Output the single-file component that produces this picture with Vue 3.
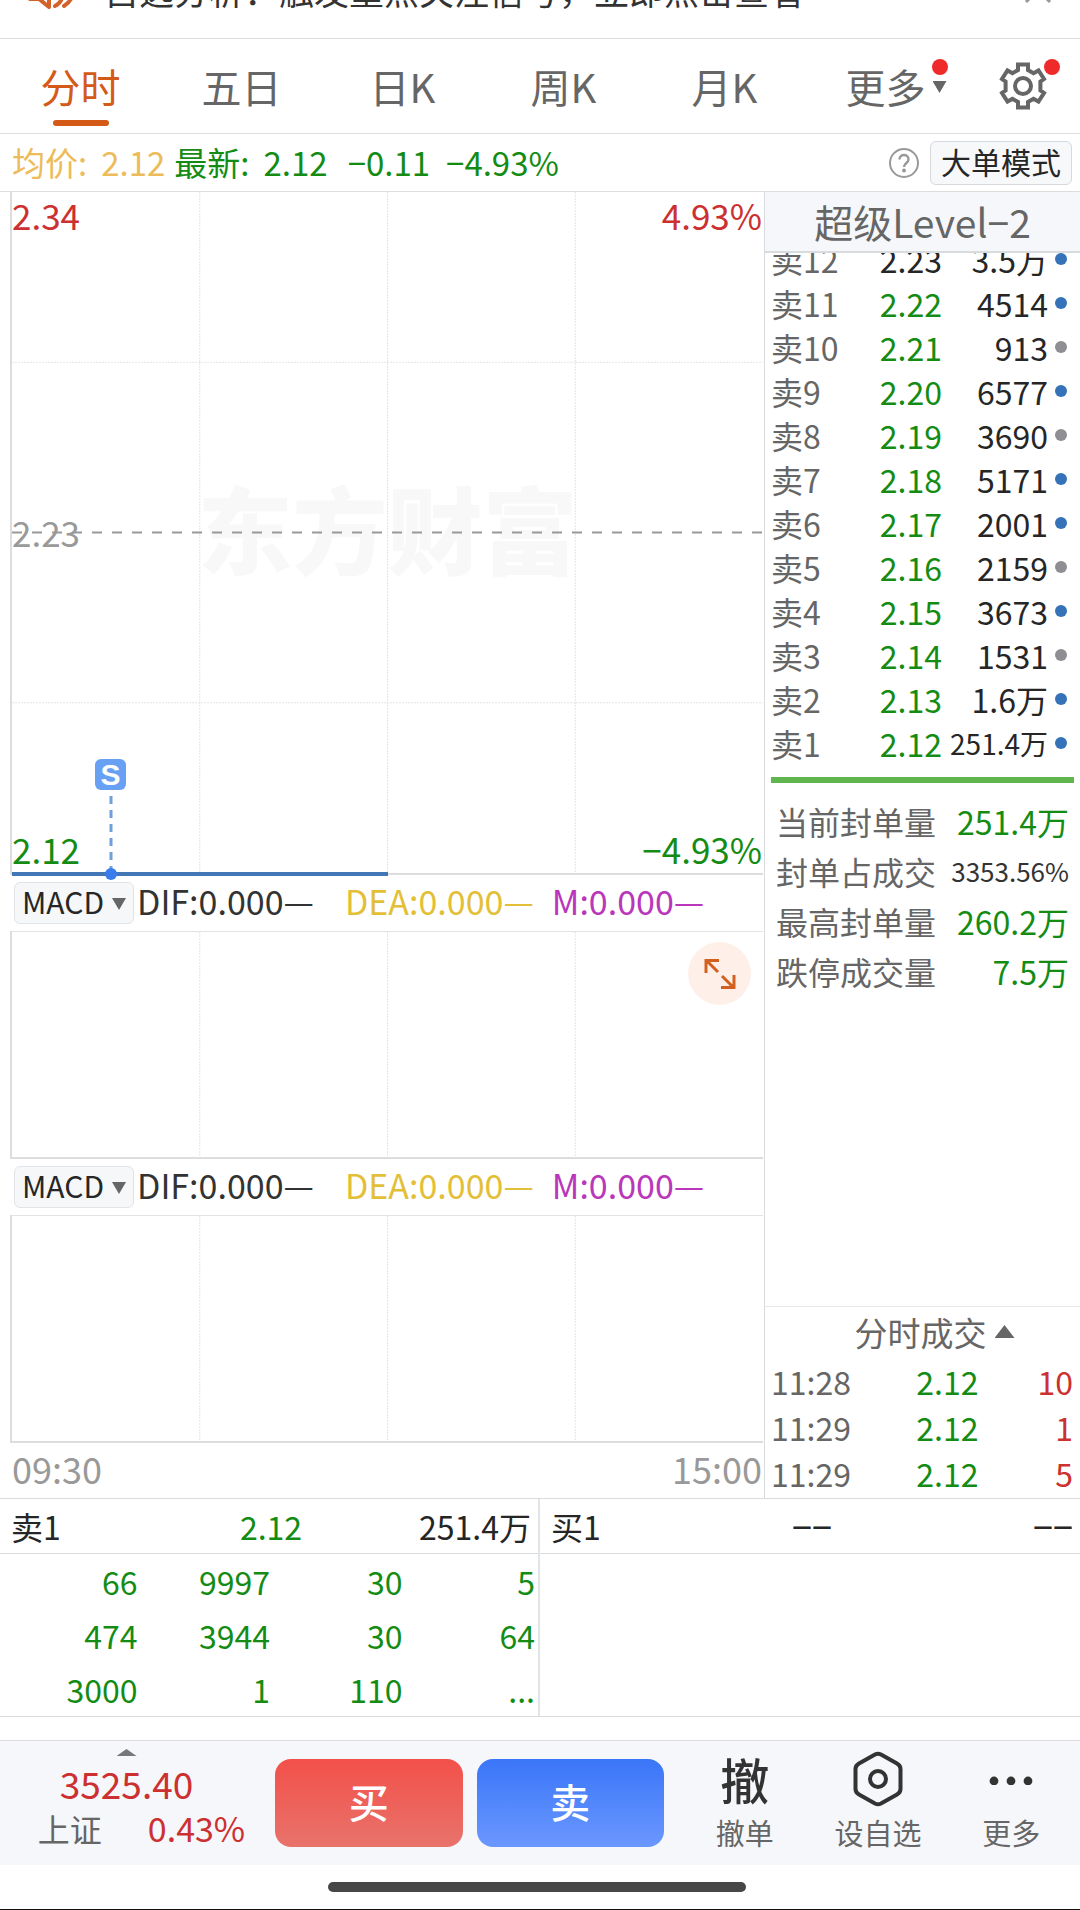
<script setup>
import { ref } from 'vue'

const tabs = ['分时', '五日', '日K', '周K', '月K', '更多']
const active = ref('分时')

const asks = [
  { n: 12, price: '2.23', vol: '3.5万', big: true, flat: true },
  { n: 11, price: '2.22', vol: '4514', big: true },
  { n: 10, price: '2.21', vol: '913' },
  { n: 9, price: '2.20', vol: '6577', big: true },
  { n: 8, price: '2.19', vol: '3690' },
  { n: 7, price: '2.18', vol: '5171', big: true },
  { n: 6, price: '2.17', vol: '2001', big: true },
  { n: 5, price: '2.16', vol: '2159' },
  { n: 4, price: '2.15', vol: '3673', big: true },
  { n: 3, price: '2.14', vol: '1531' },
  { n: 2, price: '2.13', vol: '1.6万', big: true },
  { n: 1, price: '2.12', vol: '251.4万', big: true, small: true },
]

const stats = [
  { label: '当前封单量', value: '251.4万' },
  { label: '封单占成交', value: '3353.56%', ratio: true },
  { label: '最高封单量', value: '260.2万' },
  { label: '跌停成交量', value: '7.5万' },
]

const trades = [
  { time: '11:28', price: '2.12', qty: '10' },
  { time: '11:29', price: '2.12', qty: '1' },
  { time: '11:29', price: '2.12', qty: '5' },
]

const queue = [
  ['66', '9997', '30', '5'],
  ['474', '3944', '30', '64'],
  ['3000', '1', '110', '...'],
]

const indicators = ref(['MACD', 'MACD'])
</script>

<template>
  <div class="page">
    <div class="notice-clip">
      <div class="notice">
        <svg class="horn" width="46" height="40" viewBox="0 0 46 40" fill="none" stroke="#d2622a" stroke-width="4" stroke-linejoin="round" stroke-linecap="round">
          <path d="M2 12v17h9l10 8V4l-10 8z" />
          <path d="M27 36c6-3 8-8 7-14M36 36c8-5 10-12 9-20" />
        </svg>
        <span class="notice-text">自选分析：触发重点关注信号，立即点击查看</span>
        <button class="close" aria-label="关闭">
          <svg width="28" height="28" viewBox="0 0 28 28" stroke="#999" stroke-width="3"><path d="M2 2l24 24M26 2L2 26" /></svg>
        </button>
      </div>
    </div>

    <nav class="tabs">
      <button v-for="t in tabs" :key="t" class="tab" :class="{ on: t === active }" @click="active = t">
        <span class="tab-label">{{ t }}<i v-if="t === '更多'" class="more-mark"><i class="red-dot"></i><i class="tri-down"></i></i></span>
      </button>
      <button class="gear" aria-label="设置">
        <svg width="48" height="50" viewBox="0 0 48 50" fill="none" stroke="#666" stroke-width="4" stroke-linejoin="miter">
          <path d="M19 3.500h10v5.500l5.500 3.200 5-2.800 5.500 8.600-3.600 2.600v8.800l3.600 2.600-5.500 8.600-5-2.800L29 41v5.500H19V41l-5.500-3.200-5 2.800L3 32l3.600-2.600v-8.800L3 18l5.500-8.600 5 2.800L19 9z" />
          <circle cx="24" cy="25" r="8" />
        </svg>
        <i class="red-dot gear-dot"></i>
      </button>
    </nav>

    <div class="info">
      <span class="avg">均价:</span><span class="avg num">2.12</span>
      <span class="last">最新:</span><span class="green num">2.12</span>
      <span class="chg">−0.11</span>
      <span class="pct">−4.93%</span>
      <button class="help" aria-label="帮助">
        <svg width="32" height="32" viewBox="0 0 32 32" fill="none" stroke="#999" stroke-width="2">
          <circle cx="16" cy="16" r="14" />
          <path d="M11.500 12.500c0-6 9-6 9 0 0 3.500-4.500 3.500-4.500 7.500" stroke-width="2.400" />
          <circle cx="16" cy="23.500" r="1" fill="#999" />
        </svg>
      </button>
      <button class="mode">大单模式</button>
    </div>

    <main class="body">
      <section class="charts">
        <div class="plot price-plot">
          <div class="watermark">东方财富</div>
          <svg class="grid" width="100%" height="100%">
            <g stroke="#e4e4e4" stroke-width="1" stroke-dasharray="2 1">
              <line x1="25%" x2="25%" y1="0" y2="100%" /><line x1="50%" x2="50%" y1="0" y2="100%" /><line x1="75%" x2="75%" y1="0" y2="100%" />
              <line x1="0" x2="100%" y1="25%" y2="25%" /><line x1="0" x2="100%" y1="75%" y2="75%" />
            </g>
            <line x1="0" x2="100%" y1="50%" y2="50%" stroke="#999" stroke-width="2" stroke-dasharray="10 10" />
          </svg>
          <span class="axis top-left red">2.34</span>
          <span class="axis top-right red">4.93%</span>
          <span class="axis mid-left">2.23</span>
          <span class="axis bottom-left green">2.12</span>
          <span class="axis bottom-right green">−4.93%</span>
          <div class="trend"></div>
          <div class="marker">
            <b class="badge">S</b>
            <svg width="12" height="90" viewBox="0 0 12 90"><line x1="6" y1="6" x2="6" y2="80" stroke="#6ea0dc" stroke-width="3" stroke-dasharray="8 6" /><circle cx="6" cy="84" r="6" fill="#3a7cec" /></svg>
          </div>
        </div>

        <template v-for="(ind, i) in indicators" :key="i">
          <div class="ind-row">
            <div class="select-wrap">
              <select v-model="indicators[i]" class="select" aria-label="指标"><option>MACD</option></select>
              <i class="tri-down select-tri"></i>
            </div>
            <span class="dif">DIF:0.000—</span>
            <span class="dea">DEA:0.000—</span>
            <span class="macd">M:0.000—</span>
          </div>
          <div class="plot ind-plot">
            <svg class="grid" width="100%" height="100%">
              <g stroke="#e4e4e4" stroke-width="1" stroke-dasharray="2 1">
                <line x1="25%" x2="25%" y1="0" y2="100%" /><line x1="50%" x2="50%" y1="0" y2="100%" /><line x1="75%" x2="75%" y1="0" y2="100%" />
              </g>
            </svg>
            <button v-if="i === 0" class="expand" aria-label="全屏">
              <svg width="32" height="32" viewBox="0 0 32 32" fill="none" stroke="#d2601f" stroke-width="3">
                <path d="M2 15V2.500h13M3 3l11 11M30 17v12.500H17M29 29L18 18" />
              </svg>
            </button>
          </div>
        </template>
        <div class="times"><span>09:30</span><span>15:00</span></div>
      </section>

      <aside class="side">
        <h2 class="side-title">超级Level−2</h2>
        <div class="asks-clip">
          <table class="asks">
            <tbody>
              <tr v-for="a in asks" :key="a.n">
                <th scope="row">卖{{ a.n }}</th>
                <td class="ask-price" :class="a.flat ? 'dark' : 'green'">{{ a.price }}</td>
                <td class="ask-vol" :class="{ small: a.small }">{{ a.vol }}</td>
                <td class="ask-dot"><i class="dot" :class="{ big: a.big }"></i></td>
              </tr>
            </tbody>
          </table>
        </div>
        <div class="green-bar"></div>
        <dl class="stats">
          <div v-for="s in stats" :key="s.label" class="stat">
            <dt>{{ s.label }}</dt>
            <dd :class="s.ratio ? 'ratio' : 'green'">{{ s.value }}</dd>
          </div>
        </dl>
        <div class="trades">
          <button class="trades-title">分时成交<i class="tri-up"></i></button>
          <table class="trade-table">
            <tbody>
              <tr v-for="(t, i) in trades" :key="i">
                <td class="trade-time">{{ t.time }}</td>
                <td class="green trade-price">{{ t.price }}</td>
                <td class="red trade-qty">{{ t.qty }}</td>
              </tr>
            </tbody>
          </table>
        </div>
      </aside>
    </main>

    <section class="queues">
      <div class="queue sell-queue">
        <div class="queue-head"><span>卖1</span><span class="green mid">2.12</span><span class="end">251.4万</span></div>
        <table class="queue-table">
          <tbody>
            <tr v-for="(r, i) in queue" :key="i"><td v-for="(c, j) in r" :key="j" class="green">{{ c }}</td></tr>
          </tbody>
        </table>
      </div>
      <div class="queue">
        <div class="queue-head"><span>买1</span><span class="mid blank">−−</span><span class="end blank">−−</span></div>
      </div>
    </section>

    <footer class="footer">
      <div class="index">
        <i class="tri-flat"></i>
        <div class="index-value">3525.40</div>
        <div class="index-row"><span>上证</span><span class="index-pct">0.43%</span></div>
      </div>
      <div class="orders">
        <button class="order buy">买</button>
        <button class="order sell">卖</button>
      </div>
      <div class="actions">
        <button class="action"><span class="icon glyph">撤</span><span>撤单</span></button>
        <button class="action">
          <span class="icon"><svg width="50" height="56" viewBox="0 0 50 56" fill="none" stroke="#333" stroke-width="4">
            <path d="M22 3.500q3-1.500 6 0l16 9q3.500 2 3.500 5.500v20q0 3.500-3.500 5.500l-16 9q-3 1.500-6 0l-16-9q-3.500-2-3.500-5.500V18q0-3.500 3.500-5.500z" />
            <circle cx="25" cy="28" r="8" />
          </svg></span>
          <span>设自选</span>
        </button>
        <button class="action">
          <span class="icon"><svg width="44" height="12" viewBox="0 0 44 12" fill="#333"><circle cx="5" cy="8" r="4.400" /><circle cx="22" cy="8" r="4.400" /><circle cx="39" cy="8" r="4.400" /></svg></span>
          <span>更多</span>
        </button>
      </div>
    </footer>
    <div class="home"><i></i></div>
  </div>
</template>

<style>
body { background: #fff; }
</style>

<style scoped>
* { box-sizing: border-box; }
.page { font-family: "Noto Sans CJK SC", "Noto Sans", sans-serif; font-size: 32px; line-height: 44px; color: #262626; white-space: nowrap; overflow: hidden; }
button { font: inherit; color: inherit; border: 0; padding: 0; margin: 0; background: none; cursor: pointer; }
svg { display: block; }
i, b { font-style: normal; display: block; }
table { border-collapse: collapse; width: 100%; table-layout: fixed; }
td, th { padding: 0; font-weight: 400; text-align: right; }
.red { color: #cc3030; }
.green { color: #148c14; }
.dark { color: #262626; }

.notice-clip { height: 39px; overflow: hidden; border-bottom: 1px solid #ddd; }
.notice { display: flex; align-items: center; height: 96px; margin-top: -58px; padding: 0 28px; }
.notice-text { flex: 1; margin-left: 30px; font-size: 35px; color: #333; }
.horn { overflow: visible; }

.tabs { display: grid; grid-template-columns: repeat(6, 161fr) 114fr; height: 95px; border-bottom: 1px solid #ddd; }
.tab { display: flex; justify-content: center; font-size: 40px; line-height: 94px; color: #666; }
.tab-label { position: relative; height: 94px; }
.on { color: #d45a18; }
.on .tab-label::after { content: ""; position: absolute; left: 50%; bottom: 7px; width: 56px; height: 6px; margin-left: -28px; border-radius: 3px; background: #d45a18; }
.more-mark { position: absolute; left: 86px; top: 20px; }
.red-dot { width: 16px; height: 16px; border-radius: 50%; background: #ee2a2a; }
.tri-down { width: 14px; height: 12px; background: #666; clip-path: polygon(0 0, 100% 0, 50% 100%); }
.more-mark .tri-down { margin: 6px 1px 0; }
.gear { display: flex; align-items: center; justify-content: center; position: relative; }
.gear-dot { position: absolute; top: 20px; left: 50%; margin-left: 21px; }

.info { display: flex; align-items: center; height: 58px; padding: 0 8px 0 12px; font-size: 33px; border-bottom: 1px solid #ddd; }
.info span { padding-bottom: 2px; }
.avg { color: #ecbc5a; }
.info .num { margin-left: 14px; }
.last { color: #148c14; margin-left: 9px; }
.chg { color: #148c14; margin-left: 20px; }
.pct { color: #148c14; margin-left: 16px; }
.help { margin-left: auto; }
.mode { margin-left: 10px; width: 142px; height: 44px; font-size: 30px; line-height: 38px; padding-bottom: 4px; border: 1px solid #d5d8dd; border-radius: 6px; background: #f7f8fa; }

.body { display: grid; grid-template-columns: minmax(0, 764fr) minmax(0, 316fr); border-bottom: 1px solid #d8dcde; }
.charts { padding-left: 10px; }
.plot { position: relative; border-left: 2px solid #ddd; border-bottom: 2px solid #ddd; margin-right: 1px; }
.price-plot { height: 683px; }
.ind-plot { height: 228px; border-top: 1px solid #e2e2e2; }
.grid { position: absolute; inset: 0; }
.watermark { position: absolute; inset: 0; display: flex; align-items: center; justify-content: center; padding-bottom: 12px; font-size: 95px; font-weight: 900; color: #f8f8f8; }
.axis { position: absolute; font-size: 35px; line-height: 48px; }
.top-left { left: 0; top: -1px; }
.top-right { right: 1px; top: -1px; }
.mid-left { left: 0; top: 50%; margin-top: -25px; color: #999; }
.bottom-left { left: 0; bottom: 0; }
.bottom-right { right: 1px; bottom: 0; }
.trend { position: absolute; left: 0; bottom: -3px; width: 50%; height: 4px; background: #4376b4; }
.marker { position: absolute; left: 13%; bottom: -7px; width: 32px; margin-left: -15px; display: flex; flex-direction: column; align-items: center; }
.badge { width: 31px; height: 31px; border-radius: 6px; background: #68a1f4; color: #fff; font-family: "Liberation Sans", sans-serif; font-size: 30px; line-height: 32px; text-align: center; }

.ind-row { display: flex; align-items: center; height: 56px; padding-left: 4px; font-size: 34px; }
.select-wrap { position: relative; }
.select { appearance: none; display: block; width: 120px; height: 42px; padding: 0 0 4px 7px; border: 1px solid #e1e4e8; border-radius: 6px; background: #f6f7f9; color: #262626; font-family: inherit; font-size: 30px; line-height: 37px; }
.select-tri { position: absolute; right: 8px; top: 16px; pointer-events: none; }
.ind-row span { padding-bottom: 4px; }
.dif { margin-left: 3px; color: #333; }
.dea { margin-left: 31px; color: #e3bf38; }
.macd { margin-left: 18px; color: #ba36ba; }
.expand { position: absolute; right: 12px; top: 10px; width: 63px; height: 63px; border-radius: 50%; background: #fef0e9; display: flex; align-items: center; justify-content: center; }
.times { display: flex; justify-content: space-between; height: 55px; padding: 0 2px; font-size: 36px; line-height: 50px; color: #999; }

.side { display: flex; flex-direction: column; border-left: 1px solid #d8dcde; }
.side-title { margin: 0; height: 61px; font-size: 39px; font-weight: 400; line-height: 59px; text-align: center; color: #666; background: #f6f7fa; border-bottom: 2px solid #d8dcde; }
.asks-clip { overflow: hidden; }
.asks { margin-top: -16px; }
.asks tr { height: 44px; }
.asks th { width: 82px; padding-left: 6px; text-align: left; color: #666; }
.ask-vol { width: 106px; }
.small { font-size: 28px; }
.ask-dot { width: 32px; }
.dot { width: 12px; height: 12px; margin-left: 7px; border-radius: 50%; background: #8e8e93; }
.dot.big { background: #3572b8; }
.green-bar { height: 6px; margin: 12px 6px 0; background: #60b54e; }
.stats { margin: 14px 11px 0; }
.stat { display: flex; justify-content: space-between; height: 50px; line-height: 48px; }
dt { color: #666; }
dd { margin: 0; }
.ratio { font-size: 26px; color: #333; }
.trades { margin-top: auto; padding-bottom: 2px; border-top: 1px solid #e8e8e8; }
.trades-title { display: flex; align-items: center; justify-content: center; width: 100%; height: 51px; padding: 0 0 2px 24px; font-size: 33px; color: #666; }
.tri-up { width: 20px; height: 13px; margin-left: 8px; background: #666; clip-path: polygon(50% 0, 100% 100%, 0 100%); }
.trade-table tr { height: 46px; }
.trade-time { width: 112px; padding-left: 6px; text-align: left; color: #666; }
.trade-table .trade-qty { padding-right: 7px; }

.queues { display: grid; grid-template-columns: 1fr 1fr; border-bottom: 1px solid #d8dcde; }
.sell-queue { border-right: 2px solid #e2e5e7; }
.queue-head { display: grid; grid-template-columns: 1fr 1fr 1fr; height: 55px; line-height: 54px; padding: 0 7px 0 11px; border-bottom: 1px solid #d8dcde; }
.mid { text-align: center; }
.end { text-align: right; }
.blank { font-size: 36px; line-height: 52px; }
.queue-table { width: calc(100% - 8px); margin-left: 5px; }
.queue-table tr { height: 54px; }

.footer { display: grid; grid-template-columns: 275fr 389fr 416fr; height: 125px; margin-top: 23px; border-top: 1px solid #dcdcdc; background: #f6f7fa; }
.index { display: flex; flex-direction: column; align-items: center; padding: 8px 22px 0 0; }
.tri-flat { width: 20px; height: 7px; background: #77777a; clip-path: polygon(50% 0, 100% 100%, 0 100%); }
.index-value { font-size: 37px; line-height: 54px; color: #cc3030; }
.index-row { display: flex; gap: 46px; line-height: 36px; padding-left: 30px; color: #666; }
.index-pct { font-size: 34px; color: #cc3030; }
.orders { display: grid; grid-template-columns: 1fr 1fr; gap: 14px; padding: 18px 0; }
.order { padding-bottom: 4px; border-radius: 16px; color: #fff; font-size: 40px; font-weight: 500; }
.buy { background: linear-gradient(#f3504a, #e8736b); }
.sell { background: linear-gradient(#3a76f8, #6b97ff); }
.actions { display: grid; grid-template-columns: repeat(3, 1fr); padding: 7px 2px 0 14px; }
.action { display: flex; flex-direction: column; align-items: center; font-size: 29px; line-height: 44px; color: #666; }
.icon { display: flex; align-items: center; justify-content: center; height: 62px; color: #333; }
.glyph { font-size: 49px; font-weight: 500; }
.home { display: flex; justify-content: center; height: 45px; padding: 17px 6px 0 0; border-bottom: 1px solid #111; }
.home i { width: 418px; max-width: 60%; height: 10px; border-radius: 5px; background: #474747; }
</style>
